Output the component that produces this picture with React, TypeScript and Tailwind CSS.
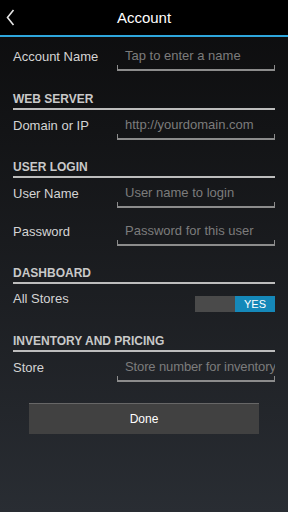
import React from "react";

const font = { fontFamily: '"Liberation Sans", Arial, sans-serif' };

function Field({
  label,
  placeholder,
  className = "",
  tight = false,
}: {
  label: string;
  placeholder: string;
  className?: string;
  tight?: boolean;
}) {
  return (
    <div className={`flex h-[30px] items-stretch justify-between ${className}`}>
      <div className="flex items-center pt-[1px] text-[13px] text-[#d4d4d4]">{label}</div>
      <div className="relative flex w-[158px] items-center overflow-hidden border-b-2 border-[#8c8c8c] pl-[8px] pt-[1px]">
        <span className={`whitespace-nowrap text-[13px] text-[#7c7c7c] ${tight ? "tracking-[-0.12px]" : ""}`}>
          {placeholder}
        </span>
        <span className="absolute bottom-0 left-0 h-[4px] w-[1px] bg-[#8c8c8c]" />
        <span className="absolute bottom-0 right-0 h-[4px] w-[1px] bg-[#8c8c8c]" />
      </div>
    </div>
  );
}

function Section({ title, className = "" }: { title: string; className?: string }) {
  return (
    <div className={`border-b-2 border-[#bdbdbd] pb-[2px] ${className}`}>
      <div className="text-[12px] font-bold leading-[14px] text-[#c9c9c9]">{title}</div>
    </div>
  );
}

export default function App() {
  return (
    <div
      className="flex h-[512px] w-[288px] flex-col bg-gradient-to-b from-[#0c0c0d] to-[#292d33]"
      style={font}
    >
      <div className="relative flex h-[35px] items-center justify-center bg-black pt-[1px]">
        <svg className="absolute left-[6px] top-[9px]" width="9" height="17" viewBox="0 0 9 17">
          <path d="M7.5 1 L1.5 8.5 L7.5 16" fill="none" stroke="#e5e5e5" strokeWidth="1.6" />
        </svg>
        <span className="text-[15px] text-white">Account</span>
      </div>
      <div className="h-[2px] bg-[#2ea6dc]" />

      <div className="px-[13px]">
        <Field label="Account Name" placeholder="Tap to enter a name" className="mt-[4px]" />

        <Section title="WEB SERVER" className="mt-[21px]" />
        <Field label="Domain or IP" placeholder="http://yourdomain.com" />

        <Section title="USER LOGIN" className="mt-[20px]" />
        <Field label="User Name" placeholder="User name to login" />
        <Field label="Password" placeholder="Password for this user" className="mt-[8px]" />

        <Section title="DASHBOARD" className="mt-[20px]" />
        <div className="flex items-start justify-between pt-[7px]">
          <span className="text-[13px] leading-[16px] text-[#d4d4d4]">All Stores</span>
          <div className="mt-[5px] flex h-[16px] w-[80px]">
            <div className="w-[40px] bg-[#4a4a4a]" />
            <div className="flex flex-1 items-center justify-center bg-[#1588b9] text-[11px] text-white">YES</div>
          </div>
        </div>

        <Section title="INVENTORY AND PRICING" className="mt-[22px]" />
        <Field label="Store" placeholder="Store number for inventory" tight />
      </div>

      <div className="mx-auto mt-[21px] flex h-[31px] w-[230px] items-center justify-center border-t border-[#676767] bg-[#414141] text-[12px] text-white">
        Done
      </div>
    </div>
  );
}
